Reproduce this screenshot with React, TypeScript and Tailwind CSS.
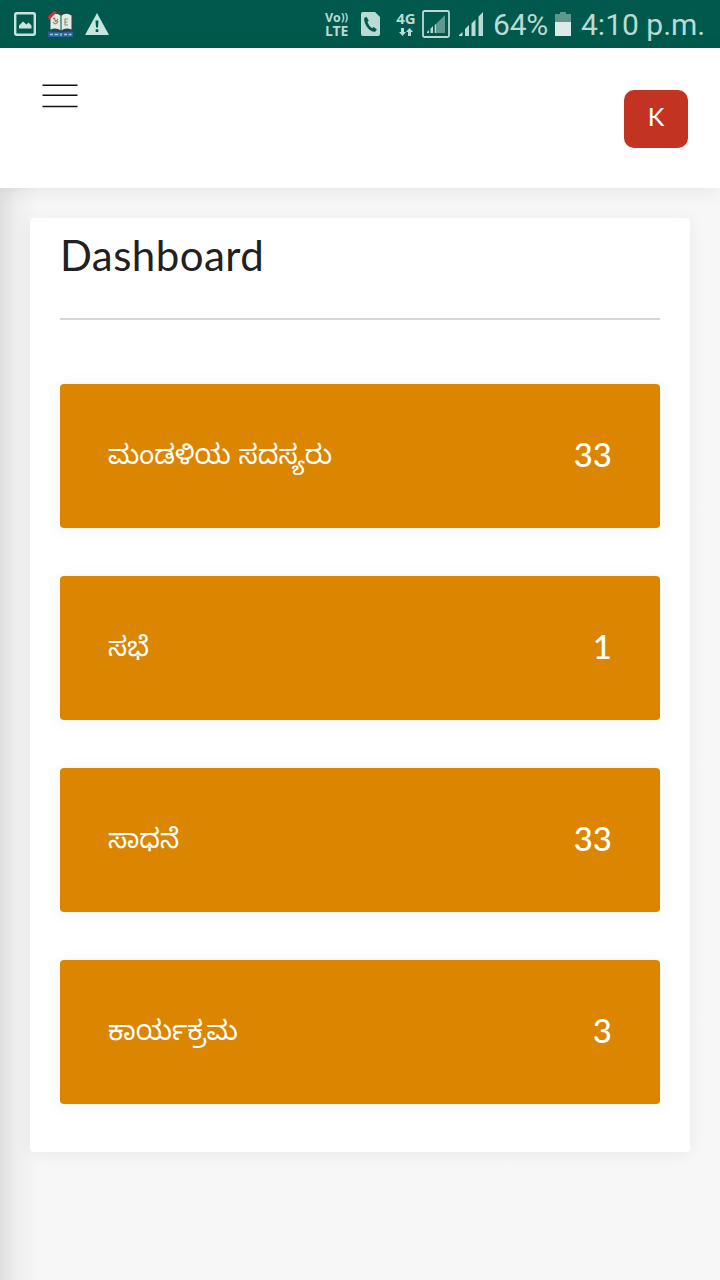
const cards = [
  { label: "ಮಂಡಳಿಯ ಸದಸ್ಯರು", count: 33 },
  { label: "ಸಭೆ", count: 1 },
  { label: "ಸಾಧನೆ", count: 33 },
  { label: "ಕಾರ್ಯಕ್ರಮ", count: 3 },
];

function PictureIcon() {
  return (
    <svg width="22" height="24" viewBox="0 0 22 24" className="shrink-0">
      <rect x="1.2" y="1.2" width="19.6" height="21.6" rx="1.5" fill="none" stroke="#c7e5df" strokeWidth="2.4" />
      <path d="M5 16.5v-3l4-4 3.5 3 2-2 3 3v3z" fill="#c7e5df" />
    </svg>
  );
}

function BookIcon() {
  return (
    <svg width="26" height="27" viewBox="0 0 26 27" className="shrink-0">
      <path d="M1 3h24v18H1z" fill="#24454d" />
      <path d="M2.500 4.500Q8 1 13 5q5-4 10.500-.5v14Q18 16 13 19.500 8 16 2.500 18.500z" fill="#dcefe5" />
      <path d="M13 5v15" stroke="#315b64" strokeWidth="1.200" />
      <path d="M5 8q2-2 2 1t3-1M5 11q3 4 5-1" fill="none" stroke="#a56b4e" strokeWidth="1.200" />
      <path d="M20 8h-3v6h3M17 11h2.500" fill="none" stroke="#a58a5e" strokeWidth="1.200" />
      <path d="M0 5.500 6 0l3 1-8 8z" fill="#d72b3c" />
      <path d="M0 20.500 11 21l2 1 2-1 10-.5v5.500H0z" fill="#2a62a0" />
      <path d="M2 23.500h3m1.500 0h4M13 22v3m3-1.500h3m1.500 0h3" stroke="#a3cbe3" strokeWidth="1.400" />
    </svg>
  );
}

function WarningIcon() {
  return (
    <svg width="24" height="22" viewBox="0 0 24 22" className="shrink-0">
      <path d="M12 0 24 22H0z" fill="#c7e5df" />
      <path d="M10.500 7.500h3l-.5 7h-2zM10.700 16.300h2.600v2.700h-2.600z" fill="#00594c" />
    </svg>
  );
}

function CallIcon() {
  return (
    <svg width="19" height="24" viewBox="0 0 19 24" className="shrink-0">
      <path d="M2 0h12l5 5v17a2 2 0 0 1-2 2H2a2 2 0 0 1-2-2V2a2 2 0 0 1 2-2z" fill="#b9dad5" />
      <path d="m3.200 6 2.300-1.300 2.300 4L6.400 10q1.400 4 4.700 6.200l1.600-1.300 3.200 2.600-1.700 2.200Q9.500 20 5.800 14.700 2.800 10 3.200 6z" fill="#00594c" />
    </svg>
  );
}

function DataArrows() {
  return (
    <svg width="14" height="8" viewBox="0 0 14 8">
      <path d="M2 0h3v4h2L3.500 8 0 4h2zM9 8h3V4h2l-3.500-4L7 4h2z" fill="#b9dad5" />
    </svg>
  );
}

function SimOneSignal() {
  return (
    <svg width="28" height="28" viewBox="0 0 28 28" className="shrink-0">
      <rect x="1" y="1" width="26" height="26" rx="1.500" fill="none" stroke="#b9dad5" strokeWidth="1.800" />
      <path d="M14 14 23 5v18h-9z" fill="#5e978d" />
      <path d="M5 23v-1l2-2v3zM8.500 23v-4.500l2.500-2.500V23zM12.700 23v-8l1.300-1v9z" fill="#b9dad5" />
    </svg>
  );
}

function SimTwoSignal() {
  return (
    <svg width="25" height="24" viewBox="0 0 25 24" className="shrink-0">
      <path d="M0 24v-1l3.500-3v4zM6 24v-7l4-4v11zM12.500 24V11.500l4-4V24zM19.500 24V4.500L24 0v24z" fill="#b9dad5" />
    </svg>
  );
}

function BatteryIcon() {
  return (
    <svg width="16" height="24" viewBox="0 0 16 24" className="shrink-0">
      <path d="M0 2h5V0h6v2h5v8H0z" fill="#5e978d" />
      <path d="M0 10h16v14H0z" fill="#dcebe7" />
    </svg>
  );
}

function StatusBar() {
  return (
    <div className="flex h-12 items-center bg-[#00594c] pl-3.5 font-['Roboto',sans-serif] text-[#b9dad5]">
      <PictureIcon />
      <div className="ml-3 flex"><BookIcon /></div>
      <div className="ml-[11px] flex"><WarningIcon /></div>
      <div className="ml-[216px] flex w-6 shrink-0 flex-col font-['Open_Sans',sans-serif] font-bold">
        <div className="flex items-center text-[12.5px] leading-[13px] whitespace-nowrap">
          <span>Vo</span>
          <span className="pb-px text-[10.5px] leading-3">))</span>
        </div>
        <div className="text-[14px] leading-[13px] tracking-[-0.3px]">LTE</div>
      </div>
      <div className="ml-3 flex"><CallIcon /></div>
      <div className="ml-4 flex w-5 shrink-0 flex-col items-center gap-[3px] font-['Open_Sans',sans-serif] text-[15px] leading-[13px] font-bold">
        <span>4G</span>
        <DataArrows />
      </div>
      <div className="ml-1.5 flex"><SimOneSignal /></div>
      <div className="ml-[9px] flex"><SimTwoSignal /></div>
      <span className="ml-[9px] w-[56px] shrink-0 pt-0.5 text-[30px] leading-[46px] tracking-[-0.2px] whitespace-nowrap">64%</span>
      <div className="ml-1.5 flex"><BatteryIcon /></div>
      <span className="ml-[10px] pt-0.5 text-[30px] leading-[46px] whitespace-nowrap">4:10 p.m.</span>
    </div>
  );
}

function Header() {
  return (
    <header className="relative z-10 flex h-[140px] items-start justify-between bg-white pr-8 pl-[42px] shadow-[0_2px_18px_rgba(0,0,0,0.08)]">
      <button type="button" aria-label="Menu" className="mt-9">
        <svg width="36" height="24" viewBox="0 0 36 24">
          <path d="M.5 1.300h35M.5 11.300h35M.5 22.500h35" stroke="#111" strokeWidth="1.500" />
        </svg>
      </button>
      <button type="button" className="mt-[42px] h-[58px] w-16 rounded-[10px] bg-[#c23321] pb-1.5 text-[25px] leading-[52px] text-white">
        K
      </button>
    </header>
  );
}

export default function App() {
  return (
    <div className="h-[1280px] w-[720px] overflow-hidden bg-[#f7f7f7] font-['Lato',sans-serif]">
      <StatusBar />
      <Header />
      <main className="h-[1092px] bg-linear-to-r from-[#dfdfdf] via-[#eeeeee] via-[16px] to-[#f7f7f7] to-[38px] px-[30px] pt-[30px]">
        <section className="h-[934px] rounded-[4px] bg-white px-[30px] shadow-[0_2px_18px_rgba(0,0,0,0.06)]">
          <div className="h-[102px] border-b-2 border-[#d6d6d6] pt-[11px]">
            <h1 className="text-[42px] leading-[52px] tracking-[0.45px] text-[#212121]">Dashboard</h1>
          </div>
          <div className="flex flex-col gap-12 pt-16">
            {cards.map((card) => (
              <div
                key={card.label}
                className="flex h-36 items-center justify-between rounded-[4px] bg-[#db8500] px-12 text-white shadow-[0_2px_18px_rgba(0,0,0,0.06)]"
              >
                <span className="pt-[10px] font-['Noto_Sans_Kannada','Noto_Sans',sans-serif] text-[27.1px] leading-10 whitespace-nowrap">
                  {card.label}
                </span>
                <span className="pb-1 text-[33px] leading-10 font-medium">{card.count}</span>
              </div>
            ))}
          </div>
        </section>
      </main>
    </div>
  );
}
